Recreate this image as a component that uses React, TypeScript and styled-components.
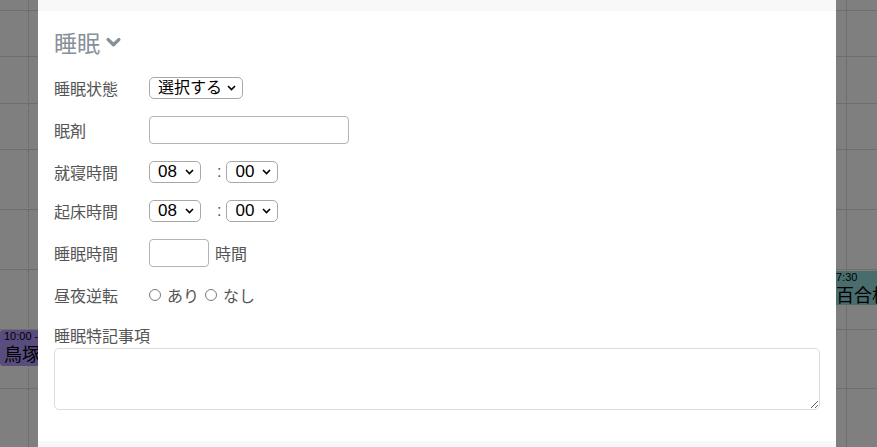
import React, { useState } from 'react';
import styled, { createGlobalStyle } from 'styled-components';

const GlobalStyle = createGlobalStyle`
  html, body {
    margin: 0;
    padding: 0;
    background: #fff;
  }
  body {
    font-family: 'Liberation Sans', 'Noto Sans CJK JP', sans-serif;
    overflow: hidden;
  }
  * {
    box-sizing: border-box;
  }
`;

const JP = `'Noto Sans CJK JP', 'Liberation Sans', sans-serif`;
const NUM = `'Liberation Sans', 'Noto Sans CJK JP', sans-serif`;

// calendar behind the modal
const Screen = styled.div`
  position: relative;
  width: 877px;
  height: 447px;
  overflow: hidden;
  background: #fff;
`;

const CalendarGrid = styled.div`
  display: grid;
  grid-template-columns: 29px 818px 1fr;
  grid-template-rows: 11px 46px 47px 46px 60px 60px 60px 59px 60px;
`;

const Cell = styled.div<{ col: number }>`
  border-bottom: 1px solid #dcdcdc;
  border-right: ${({ col }) =>
    col === 0 ? '1px dotted #c8c8c8' : col === 1 ? '1px solid #dcdcdc' : 'none'};
`;

const Event = styled.div<{ bg: string; top: number; left: number; h: number }>`
  position: absolute;
  top: ${({ top }) => top}px;
  left: ${({ left }) => left}px;
  width: 70px;
  height: ${({ h }) => h}px;
  padding: 0 4px;
  border-radius: 3px;
  background: ${({ bg }) => bg};
  color: #000;
  overflow: hidden;
  white-space: nowrap;
`;

const EventTime = styled.div`
  font-family: ${NUM};
  font-size: 11px;
  line-height: 13px;
`;

const EventName = styled.div`
  font-family: ${JP};
  font-size: 18px;
  line-height: 21px;
`;

const Overlay = styled.div`
  position: absolute;
  inset: 0;
  background: rgba(0, 0, 0, 0.5);
`;

// modal
const Modal = styled.div`
  position: absolute;
  top: 0;
  left: 38px;
  width: 798px;
  height: 447px;
  display: flex;
  flex-direction: column;
  background: #fff;
  overflow: hidden;
`;

const ModalStrip = styled.div<{ grow?: boolean }>`
  height: 11px;
  flex: ${({ grow }) => (grow ? '1' : 'none')};
  background: #f8f8f8;
`;

const ModalBody = styled.div`
  height: 430px;
  padding: 18px 16px 0;
  display: flex;
  flex-direction: column;
`;

const SectionTitle = styled.div`
  display: flex;
  align-items: center;
  gap: 5px;
  height: 27px;
  margin-bottom: 21px;
  font-family: ${JP};
  font-size: 23px;
  line-height: 27px;
  color: #878f98;
`;

const Form = styled.div`
  display: flex;
  flex-direction: column;
  gap: 17px;
`;

const Row = styled.div`
  display: flex;
  align-items: center;
`;

const Label = styled.div`
  width: 95px;
  flex: none;
  font-family: ${JP};
  font-size: 16px;
  line-height: 22px;
  color: #555;
`;

const SelectWrap = styled.div<{ w: number }>`
  position: relative;
  width: ${({ w }) => w}px;
  height: 22px;
  flex: none;
`;

const Select = styled.select<{ fs: number }>`
  appearance: none;
  -webkit-appearance: none;
  width: 100%;
  height: 22px;
  margin: 0;
  padding: 0 18px 0 8px;
  border: 1px solid #a8a8a8;
  border-radius: 5px;
  background: #fff;
  color: #000;
  font-family: ${NUM};
  font-size: ${({ fs }) => fs}px;
  line-height: 20px;
  outline: none;
`;

const Caret = styled.svg`
  position: absolute;
  right: 7px;
  top: 8px;
  pointer-events: none;
`;

const TextInput = styled.input<{ w: number }>`
  width: ${({ w }) => w}px;
  height: 28px;
  margin: 0;
  padding: 0 6px;
  border: 1px solid #b4b4b4;
  border-radius: 4px;
  font-family: ${NUM};
  font-size: 15px;
  outline: none;
`;

const Colon = styled.span`
  margin: 0 5px 0 16px;
  font-family: ${NUM};
  font-size: 16px;
  color: #555;
`;

const Unit = styled.span`
  margin-left: 6px;
  font-family: ${JP};
  font-size: 16px;
  line-height: 22px;
  color: #555;
`;

const RadioLabel = styled.label`
  display: flex;
  align-items: center;
  margin-right: 6px;
  font-family: ${JP};
  font-size: 16px;
  line-height: 22px;
  color: #555;
`;

const Radio = styled.input`
  appearance: none;
  -webkit-appearance: none;
  width: 12px;
  height: 12px;
  margin: 0 6px 0 0;
  border: 1px solid #7a7a7a;
  border-radius: 50%;
  background: #fff;
  &:checked {
    box-shadow: inset 0 0 0 3px #fff;
    background: #555;
  }
`;

const NoteLabel = styled(Label)`
  width: auto;
  margin-top: 18px;
  margin-bottom: 2px;
`;

const NoteArea = styled.textarea`
  width: 766px;
  height: 62px;
  margin: 0;
  padding: 6px 8px;
  border: 1px solid #dcdcdc;
  border-radius: 5px;
  font-family: ${JP};
  font-size: 15px;
  outline: none;
`;

const Chevron = ({ color }: { color: string }) => (
  <svg width="15" height="11" viewBox="0 0 15 11" fill="none" style={{ marginLeft: 1 }}>
    <path
      d="M2.2 2.6 L7.5 7.8 L12.8 2.6"
      stroke={color}
      strokeWidth="3.4"
      strokeLinecap="round"
      strokeLinejoin="round"
    />
  </svg>
);

const SelectCaret = () => (
  <Caret width="9" height="6" viewBox="0 0 9 6">
    <path d="M1 1 L4.5 4.5 L8 1" stroke="#000" strokeWidth="1.6" fill="none" />
  </Caret>
);

const hours = Array.from({ length: 24 }, (_, i) => String(i).padStart(2, '0'));
const minutes = ['00', '15', '30', '45'];

const TimeSelect = ({ options, value }: { options: string[]; value: string }) => (
  <SelectWrap w={52}>
    <Select fs={17} defaultValue={value}>
      {options.map(o => (
        <option key={o} value={o}>
          {o}
        </option>
      ))}
    </Select>
    <SelectCaret />
  </SelectWrap>
);

const rowCols = [0, 1, 2];
const rowCount = 9;

const App = () => {
  const [reverse, setReverse] = useState<string>('');

  return (
    <>
      <GlobalStyle />
      <Screen>
        <CalendarGrid>
          {Array.from({ length: rowCount }).flatMap((_, r) =>
            rowCols.map(c => <Cell key={`${r}-${c}`} col={c} />),
          )}
        </CalendarGrid>
        <Event bg="#b39aff" top={330} left={0} h={36}>
          <EventTime>10:00 - 11:00</EventTime>
          <EventName>鳥塚</EventName>
        </Event>
        <Event bg="#93d8da" top={271} left={834} h={34}>
          <EventTime style={{ marginLeft: -2 }}>7:30</EventTime>
          <EventName style={{ marginLeft: -2 }}>百合枝</EventName>
        </Event>
        <Overlay />

        <Modal>
          <ModalStrip />
          <ModalBody>
            <SectionTitle>
              睡眠
              <Chevron color="#878f98" />
            </SectionTitle>
            <Form>
              <Row>
                <Label>睡眠状態</Label>
                <SelectWrap w={94}>
                  <Select fs={16} defaultValue="">
                    <option value="">選択する</option>
                    <option value="good">良好</option>
                    <option value="bad">不良</option>
                  </Select>
                  <SelectCaret />
                </SelectWrap>
              </Row>
              <Row>
                <Label>眠剤</Label>
                <TextInput w={200} />
              </Row>
              <Row>
                <Label>就寝時間</Label>
                <TimeSelect options={hours} value="08" />
                <Colon>:</Colon>
                <TimeSelect options={minutes} value="00" />
              </Row>
              <Row>
                <Label>起床時間</Label>
                <TimeSelect options={hours} value="08" />
                <Colon>:</Colon>
                <TimeSelect options={minutes} value="00" />
              </Row>
              <Row>
                <Label>睡眠時間</Label>
                <TextInput w={60} />
                <Unit>時間</Unit>
              </Row>
              <Row>
                <Label>昼夜逆転</Label>
                <RadioLabel>
                  <Radio
                    type="radio"
                    name="reverse"
                    checked={reverse === 'yes'}
                    onChange={() => setReverse('yes')}
                  />
                  あり
                </RadioLabel>
                <RadioLabel>
                  <Radio
                    type="radio"
                    name="reverse"
                    checked={reverse === 'no'}
                    onChange={() => setReverse('no')}
                  />
                  なし
                </RadioLabel>
              </Row>
            </Form>
            <NoteLabel>睡眠特記事項</NoteLabel>
            <NoteArea />
          </ModalBody>
          <ModalStrip grow />
        </Modal>
      </Screen>
    </>
  );
};

export default App;
